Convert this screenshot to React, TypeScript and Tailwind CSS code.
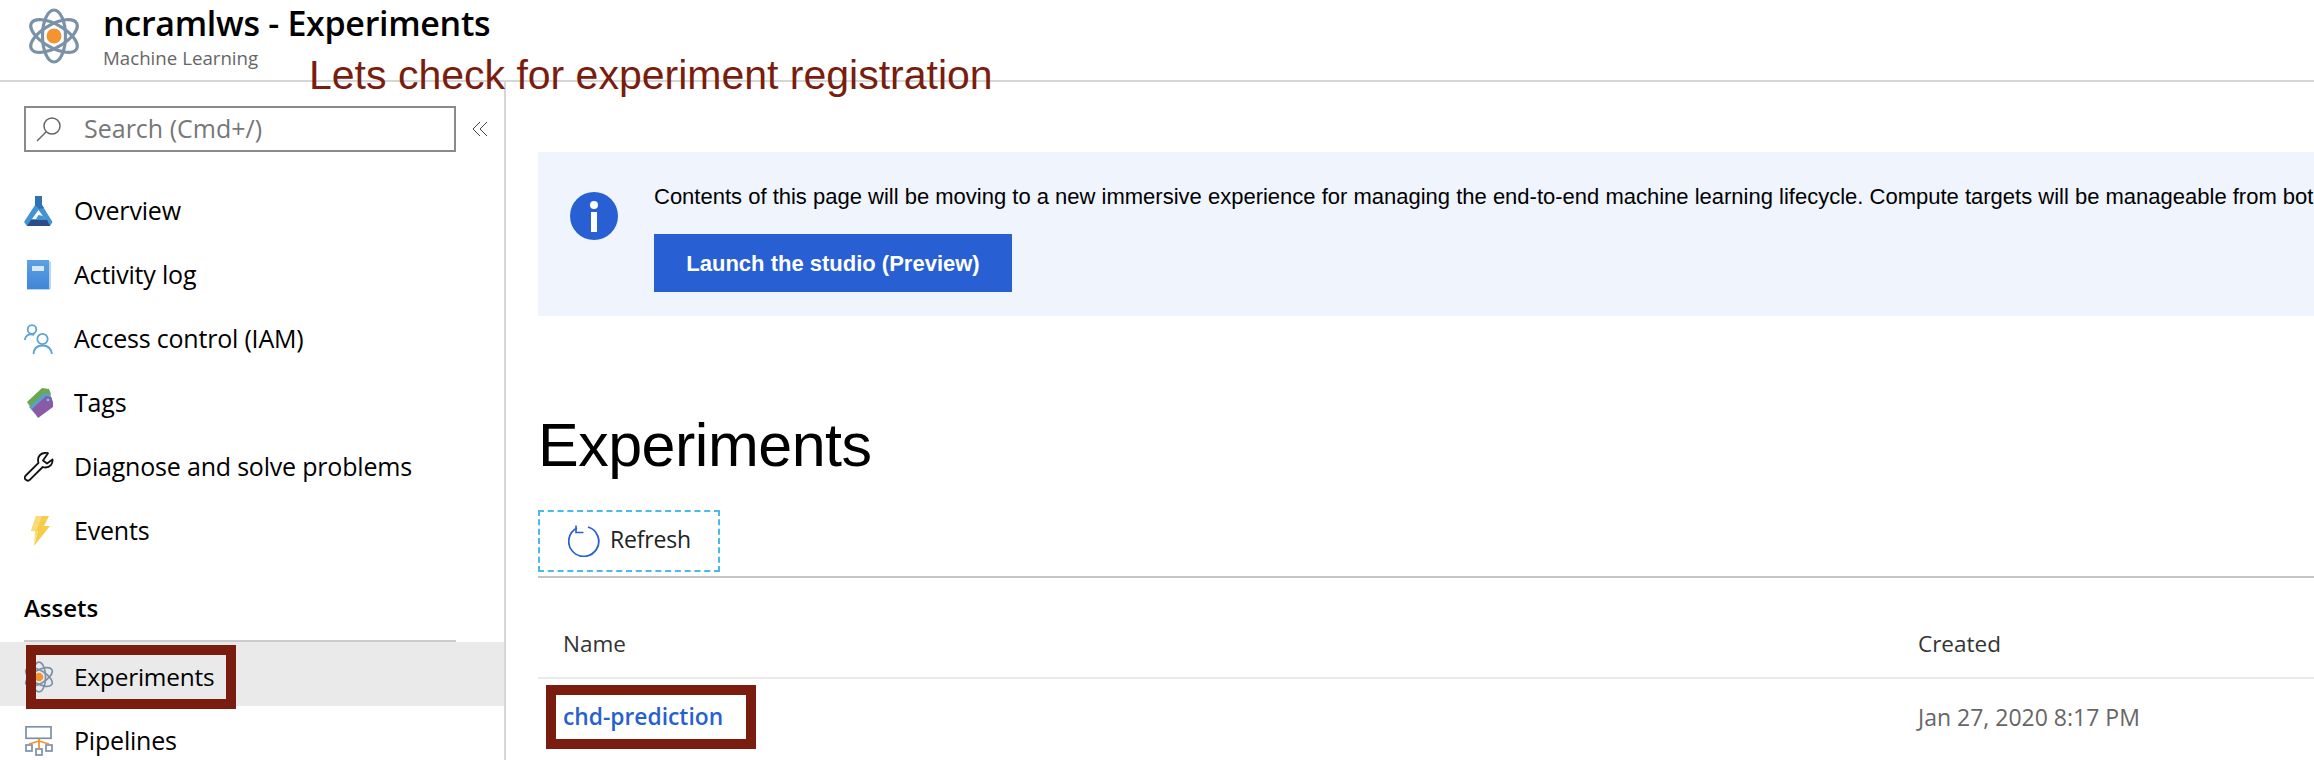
import React from "react";

const Atom = ({ className, sw = 3 }: { className?: string; sw?: number }) => (
  <svg viewBox="0 0 52 56" className={className} fill="none">
    <g stroke="#7b91a8" strokeWidth={sw}>
      <ellipse cx="26" cy="28" rx="11.5" ry="26" />
      <ellipse cx="26" cy="28" rx="11.5" ry="26" transform="rotate(60 26 28)" />
      <ellipse cx="26" cy="28" rx="11.5" ry="26" transform="rotate(120 26 28)" />
    </g>
    <circle cx="26" cy="28" r="7.5" fill="#f3942f" />
  </svg>
);

const Flask = () => (
  <svg viewBox="0 0 30 30" className="w-[30px] h-[30px]">
    <path d="M11 0H18V9L28.500 26 26 30H3L0 26 11 9Z" fill="#4193d3" />
    <path d="M11 0H18V9L20 12 15 13 11 9Z" fill="#2f72b3" />
    <path d="M14.500 14 8 23H21Z" fill="#fff" />
    <path d="M14.500 19 12 23H21L19 20Z" fill="#4193d3" />
    <path d="M3 30 7 24H23L26 30Z" fill="#2a4d85" />
  </svg>
);

const Book = () => (
  <svg viewBox="0 0 30 30" className="w-[30px] h-[30px]">
    <defs>
      <linearGradient id="bookFill" x1="0" y1="0" x2="0" y2="1">
        <stop offset="0" stopColor="#5ea0e4" />
        <stop offset="1" stopColor="#3f86d6" />
      </linearGradient>
    </defs>
    <path d="M3 0h22v29H3z" fill="url(#bookFill)" />
    <path d="M25 1l2 1v27l-2 1H3v-1h22z" fill="#b8d4f0" />
    <path d="M8 6h12v5H8z" fill="#d9e8f8" />
  </svg>
);

const People = () => (
  <svg viewBox="0 0 30 30" className="w-[30px] h-[30px]" fill="none" stroke="#5ba3d0" strokeWidth="1.8">
    <circle cx="8" cy="5.5" r="4.3" />
    <path d="M0.8 16c.6-3.8 3-5.6 6.4-5.6 1.2 0 2.2.2 3 .6" />
    <circle cx="18.5" cy="15" r="5.2" />
    <path d="M9.5 30c.4-5.5 4-8.5 9-8.5s8.6 3 9.400 8.500" />
  </svg>
);

const Tags = () => (
  <svg viewBox="0 0 30 30" className="w-[30px] h-[30px]">
    <path d="M3 14 18 0l7 1 2 5-18 17z" fill="#6aa84f" />
    <path d="M5 19 20 5l6 1 2 5-17 15z" fill="#5aa0c8" />
    <path d="M8 21 22 8l5 1 2 5v5L14 30z" fill="#8a5aa6" />
    <circle cx="24" cy="12" r="1.400" fill="#5ad0e6" />
  </svg>
);

const Wrench = () => (
  <svg viewBox="0 0 30 30" className="w-[30px] h-[30px]" fill="none" stroke="#111" strokeWidth="1.8" strokeLinejoin="round">
    <path d="M21 1c-4 0-7 3-7 7 0 1 .2 2 .5 2.800L1.800 23.500c-1.400 1.400-1.400 3 0 4.200 1.300 1.300 2.900 1.300 4.200 0l12.700-12.700c.8.300 1.800.5 2.800.5 4.500 0 7.500-3.500 7-8l-5.500 4-4-3 5-7.300c-1-.5-2-.7-3-.7z" />
  </svg>
);

const Bolt = () => (
  <svg viewBox="0 0 30 30" className="w-[30px] h-[30px]">
    <path d="M12 0h13l-5 10h6L10 30l4-15H7z" fill="#f6cc4a" />
    <path d="M12 0h6l-6 15h2l-4 15 0 0 1-15H7z" fill="#f9dc7a" />
  </svg>
);

const Pipe = () => (
  <svg viewBox="0 0 30 30" className="w-[30px] h-[30px]" fill="none">
    <rect x="2" y="0.800" width="25" height="11.500" stroke="#7b91a8" strokeWidth="1.700" fill="#fff" />
    <rect x="2" y="19" width="6" height="6" stroke="#7b91a8" strokeWidth="1.700" />
    <rect x="12" y="23" width="6" height="6" stroke="#7b91a8" strokeWidth="1.700" />
    <rect x="22" y="19" width="6" height="6" stroke="#7b91a8" strokeWidth="1.700" />
    <path d="M15 13v10M15 15l-10 3M15 15l10 3" stroke="#f3942f" strokeWidth="1.800" />
  </svg>
);

const items = [
  { label: "Overview", icon: <Flask /> },
  { label: "Activity log", icon: <Book /> },
  { label: "Access control (IAM)", icon: <People /> },
  { label: "Tags", icon: <Tags /> },
  { label: "Diagnose and solve problems", icon: <Wrench /> },
  { label: "Events", icon: <Bolt /> },
];

const Row = ({ label, icon, cls = "", textCls = "text-[25px]" }: { label: string; icon: React.ReactNode; cls?: string; textCls?: string }) => (
  <div className={`flex items-center h-[64px] pl-[24px] gap-[20px] ${cls}`}>
    <span className="w-[30px] h-[30px] shrink-0 flex items-center justify-center">{icon}</span>
    <span className={`${textCls} text-black font-['Open_Sans',sans-serif] tracking-[-0.2px] whitespace-nowrap`}>{label}</span>
  </div>
);

export default function App() {
  return (
    <div className="relative w-[2314px] h-[760px] overflow-hidden bg-white font-['Open_Sans',sans-serif]">
      <header className="h-[82px] border-b-2 border-[#d6d6d6] flex items-start pl-[28px]">
        <Atom className="w-[52px] h-[56px] mt-[8px] shrink-0" sw={3.2} />
        <div className="ml-[23px] flex flex-col">
          <div className="text-[34px] leading-[40px] mt-[3px] font-semibold text-black whitespace-nowrap tracking-[-0.3px]">ncramlws - Experiments</div>
          <div className="text-[18.700px] leading-[24px] mt-[3px] text-[#666] whitespace-nowrap">Machine Learning</div>
        </div>
      </header>

      <div className="flex h-[678px]">
        <aside className="w-[506px] shrink-0 border-r-2 border-[#d6d6d6] overflow-hidden">
          <div className="flex items-center pl-[24px] pt-[24px]">
            <div className="w-[432px] h-[46px] border-2 border-[#8a8a8a] flex items-center pl-[10px]">
              <svg viewBox="0 0 26 26" className="w-[26px] h-[26px]" fill="none" stroke="#666" strokeWidth="1.500">
                <circle cx="16" cy="10" r="8" />
                <path d="M10 16 1 25" />
              </svg>
              <span className="ml-[22px] text-[25px] text-[#777]">Search (Cmd+/)</span>
            </div>
            <svg viewBox="0 0 16 16" className="w-[16px] h-[16px] ml-[16px]" fill="none" stroke="#444" strokeWidth="1">
              <path d="M8 1 1 8l7 7M15 1 8 8l7 7" />
            </svg>
          </div>

          <nav className="mt-[27px]">
            {items.map((it) => (
              <Row key={it.label} label={it.label} icon={it.icon} />
            ))}
          </nav>

          <div className="ml-[24px] mr-[48px] mt-[31px] h-[48px] border-b-2 border-[#cccccc] text-[24px] leading-[28px] font-semibold text-black">Assets</div>
          <Row label="Experiments" textCls="text-[24.400px]" cls="bg-[#ebeaea] pt-[6px]" icon={<Atom className="w-[30px] h-[32px]" sw={3} />} />
          <Row label="Pipelines" cls="pt-[6px]" icon={<Pipe />} />
        </aside>

        <main className="flex-1 min-w-0 pl-[32px] pt-[70px] overflow-hidden">
          <div className="h-[164px] bg-[#eff4fd] flex pl-[32px]">
            <svg viewBox="0 0 48 48" className="w-[48px] h-[48px] mt-[40px] shrink-0">
              <circle cx="24" cy="24" r="24" fill="#285fd3" />
              <circle cx="24" cy="13" r="4" fill="#fff" />
              <rect x="21" y="20" width="6" height="20" fill="#fff" />
            </svg>
            <div className="ml-[36px] min-w-0">
              <div className="mt-[30px] h-[30px] leading-[30px] text-[22px] text-black whitespace-nowrap font-['Liberation_Sans',sans-serif]">
                Contents of this page will be moving to a new immersive experience for managing the end-to-end machine learning lifecycle. Compute targets will be manageable from both
              </div>
              <button className="mt-[22px] w-[358px] h-[58px] bg-[#285fd3] text-white text-[22px] font-bold font-['Liberation_Sans',sans-serif]">
                Launch the studio (Preview)
              </button>
            </div>
          </div>

          <h1 className="mt-[96px] text-[61px] leading-[66px] text-black font-normal font-['Liberation_Sans',sans-serif] tracking-[-0.5px]">Experiments</h1>

          <div className="mt-[32px] border-b-2 border-[#c4c4c4] h-[68px]">
            <button className="w-[182px] h-[62px] border-2 border-dashed border-[#4db8ea] flex items-center pl-[28px] gap-[10px]">
              <svg viewBox="0 0 32 32" className="w-[32px] h-[32px] shrink-0" fill="none" stroke="#285fd3" strokeWidth="1.800">
                <path d="M20 2a15 15 0 1 1-11 1" />
                <path d="M8 0.500v7h7.500" strokeWidth="1.600" />
              </svg>
              <span className="text-[23px] leading-[28px] pb-[5px] text-[#222] tracking-[-0.2px]">Refresh</span>
            </button>
          </div>

          <div className="mt-[41px] grid grid-cols-[1380px_1fr] border-b-2 border-[#eaeaea] h-[60px] text-[22.500px] text-[#333]">
            <div className="pl-[25px] leading-[50px]">Name</div>
            <div className="leading-[50px]">Created</div>
          </div>
          <div className="grid grid-cols-[1380px_1fr] h-[76px] items-center">
            <div className="pl-[25px] text-[22.800px] font-semibold text-[#285fd3]">chd-prediction</div>
            <div className="text-[23px] text-[#666]">Jan 27, 2020 8:17 PM</div>
          </div>
        </main>
      </div>

      <div className="absolute left-[309px] top-[53px] text-[41px] leading-[44px] text-[#7a1d0f] whitespace-nowrap font-['Liberation_Sans',sans-serif]">
        Lets check for experiment registration
      </div>
      <div className="absolute left-[26px] top-[645px] w-[210px] h-[64px] border-[10px] border-[#7a1d0f]" />
      <div className="absolute left-[546px] top-[685px] w-[210px] h-[64px] border-[10px] border-[#7a1d0f]" />
    </div>
  );
}
